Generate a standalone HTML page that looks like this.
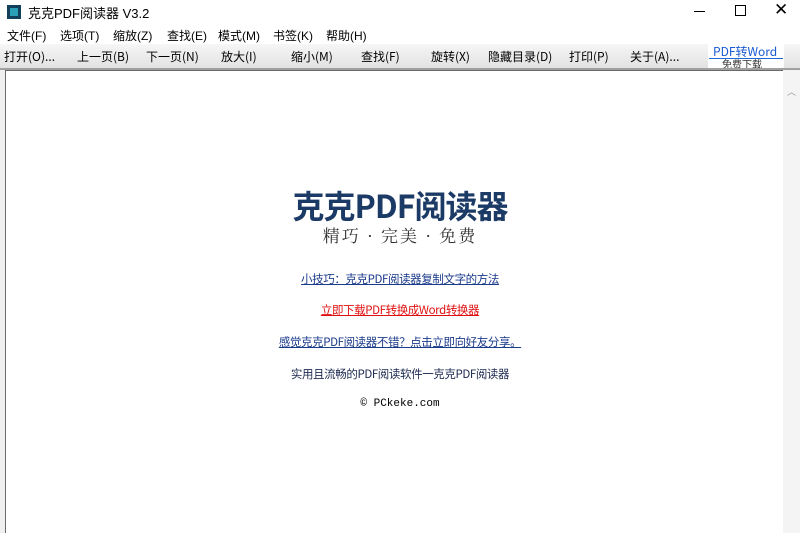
<!DOCTYPE html>
<html><head><meta charset="utf-8"><style>
*{margin:0;padding:0;box-sizing:border-box}
body{width:800px;height:533px;overflow:hidden;background:#fff;font-family:"Liberation Sans","Noto Sans CJK SC",sans-serif;position:relative}
.ab{position:absolute;white-space:nowrap}
#title{top:0;left:0;width:800px;height:24px;background:#fff}
#menu{top:24px;left:0;width:800px;height:20px;background:#fff;font-size:12px;color:#000}
#tool{top:44px;left:0;width:800px;height:24px;background:linear-gradient(#f6f6f6,#e2e2e2);font-family:"Noto Sans CJK SC",sans-serif;font-size:12px}
#line{top:68px;left:0;width:800px;height:2px;background:#a0a0a0}
#frame{top:70px;left:0;width:800px;height:463px;background:#f0f0f0}
#content{top:70px;left:5px;width:778px;height:463px;background:#fff;border-left:1px solid #6a6a6a;border-top:1px solid #6a6a6a}
#sb{top:71px;left:783px;width:17px;height:462px;background:#f4f4f4}
a{color:#1a3a8a;text-decoration:underline}
.c{left:0;width:800px;text-align:center;font-size:11.5px;letter-spacing:-0.4px;font-family:"Noto Sans CJK SC",sans-serif}
</style></head><body>
<div class="ab" id="title">
 <div class="ab" style="left:7px;top:5px;width:14px;height:14px;background:#12405a"><div class="ab" style="left:3px;top:3px;width:8px;height:8px;background:#2aa0b8"></div></div>
 <div class="ab" style="left:28px;top:3px;font-size:13px">克克PDF阅读器 V3.2</div>
 <div class="ab" style="left:694px;top:11px;width:11px;height:1px;background:#000"></div>
 <div class="ab" style="left:735px;top:5px;width:11px;height:11px;border:1px solid #000"></div>
 <div class="ab" style="left:774px;top:0px;font-size:17px">✕</div>
</div>
<div class="ab" id="menu">
 <span class="ab" style="left:7px;top:3px">文件(F)</span>
 <span class="ab" style="left:60px;top:3px">选项(T)</span>
 <span class="ab" style="left:113px;top:3px">缩放(Z)</span>
 <span class="ab" style="left:167px;top:3px">查找(E)</span>
 <span class="ab" style="left:218px;top:3px">模式(M)</span>
 <span class="ab" style="left:273px;top:3px">书签(K)</span>
 <span class="ab" style="left:326px;top:3px">帮助(H)</span>
</div>
<div class="ab" id="tool">
 <span class="ab" style="left:4px;top:4px">打开(O)...</span>
 <span class="ab" style="left:77px;top:4px">上一页(B)</span>
 <span class="ab" style="left:146px;top:4px">下一页(N)</span>
 <span class="ab" style="left:221px;top:4px">放大(I)</span>
 <span class="ab" style="left:291px;top:4px">缩小(M)</span>
 <span class="ab" style="left:361px;top:4px">查找(F)</span>
 <span class="ab" style="left:431px;top:4px">旋转(X)</span>
 <span class="ab" style="left:488px;top:4px">隐藏目录(D)</span>
 <span class="ab" style="left:569px;top:4px">打印(P)</span>
 <span class="ab" style="left:630px;top:4px">关于(A)...</span>
 <div class="ab" style="left:708px;top:0;width:76px;height:24px;background:#fff"></div>
 <span class="ab" style="left:713px;top:-1px;color:#1a5ad0;font-size:12px">PDF转Word</span>
 <div class="ab" style="left:709px;top:14px;width:74px;height:1px;background:#1a6ad8"></div>
 <span class="ab" style="left:722px;top:12px;font-size:10px;color:#333">免费下载</span>
</div>
<div class="ab" id="line"></div>
<div class="ab" id="frame"></div>
<div class="ab" id="content"></div>
<div class="ab" id="sb"><div class="ab" style="left:4px;top:14px;font-size:9px;color:#999">︿</div></div>
<div class="ab c" style="top:182px;font-size:32px;font-weight:bold;color:#1c3a66;letter-spacing:-1px">克克PDF阅读器</div>
<div class="ab c" style="top:222px;font-size:17px;color:#333;letter-spacing:2px;font-family:'Noto Serif CJK SC',serif">精巧 · 完美 · 免费</div>
<div class="ab c" style="top:271px"><a>小技巧：克克PDF阅读器复制文字的方法</a></div>
<div class="ab c" style="top:302px"><a style="color:#e01010">立即下载PDF转换成Word转换器</a></div>
<div class="ab c" style="top:334px"><a>感觉克克PDF阅读器不错？点击立即向好友分享。</a></div>
<div class="ab c" style="top:366px;color:#1c2a50">实用且流畅的PDF阅读软件一克克PDF阅读器</div>
<div class="ab c" style="top:398px;font-size:11px;letter-spacing:0;font-family:'Liberation Mono',monospace;color:#000">© PCkeke.com</div>
</body></html>
